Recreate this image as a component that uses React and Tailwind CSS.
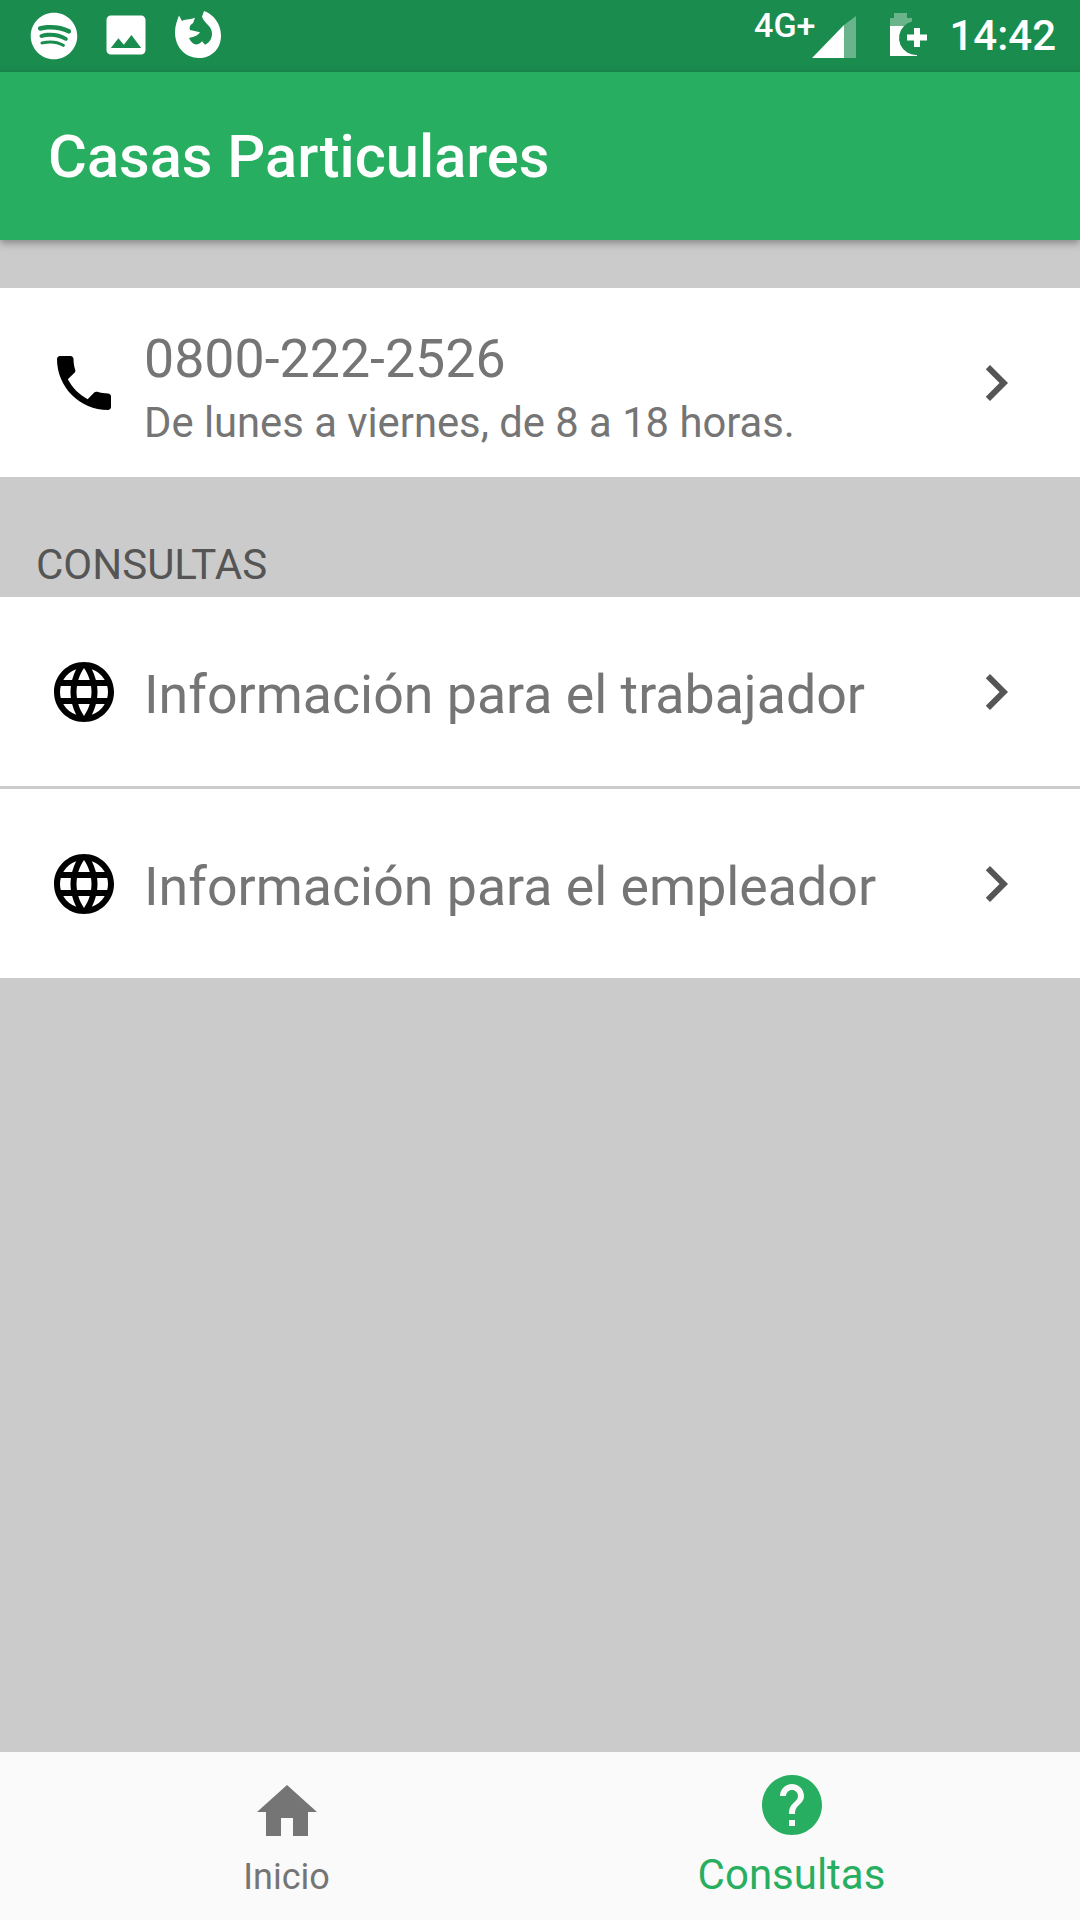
import { MdPhone, MdLanguage, MdChevronRight, MdHome, MdHelp, MdPhoto } from "react-icons/md";
import { FaSpotify } from "react-icons/fa";

function Firefox() {
  return (
    <svg width="60" height="60" viewBox="0 2.6 60 53.6" preserveAspectRatio="none" className="block">
      <path
        d="M35 8C45 11 52 20 52 30C52 42 42 50 30 50C16 50 6 40 6 27C6 21 8 17 10 12L13 17C15 15 20 16 26 14L24 19C21 20 20 23 21 25L31 27C28 31 24 31 20 32C23 38 28 40 33 35L36 38C41 36 43 32 43 28C43 21 35 19 33 13Z"
        fill="#fff"
      />
    </svg>
  );
}

function Signal() {
  return (
    <svg width="44" height="42" viewBox="0 0 44 42" className="block mt-[2px]">
      <path d="M44 0V42H32V9Z" fill="#fff" opacity="0.35" />
      <path d="M32 9V42H0Z" fill="#fff" />
    </svg>
  );
}

function Battery() {
  return (
    <svg width="38" height="44" viewBox="0 0 38 44" className="block -mt-[2px]">
      <path d="M5 0H18V5H23V8.5A17 17 0 0 0 15 13H1V5H5Z" fill="#fff" opacity="0.35" />
      <path d="M1 13H15A17 17 0 0 0 28 42V43H1Z" fill="#fff" />
      <path d="M25 15H31V21.5H38V27.5H31V34H25V27.5H18V21.5H25Z" fill="#fff" />
    </svg>
  );
}

function Row({ icon: Icon, children, className }) {
  return (
    <div className={`flex items-center bg-white ${className}`}>
      <div className="w-[144px] shrink-0 flex justify-center pl-[24px]">
        <Icon size={72} className="text-black" />
      </div>
      <div className="flex-1 text-[#757575]">{children}</div>
      <MdChevronRight size={72} className="text-[#555] mr-[48px]" />
    </div>
  );
}

export default function App() {
  return (
    <div className="w-[1080px] h-[1920px] flex flex-col bg-[#cbcbcb] overflow-hidden" style={{ fontFamily: "Roboto, sans-serif" }}>
      {/* status bar */}
      <div className="h-[72px] shrink-0 bg-[#1a8c4e] flex items-center text-white pl-[30px] pr-[24px]">
        <FaSpotify size={48} />
        <MdPhoto size={52} className="ml-[22px] -mt-[2px]" />
        <div className="ml-[17px] -mt-[2px]"><Firefox /></div>
        <div className="ml-auto flex items-center">
          <span className="text-[34px] font-medium relative -top-[11px] mr-[-3px]">4G+</span>
          <Signal />
          <div className="ml-[33px]"><Battery /></div>
          <span className="text-[42px] font-medium ml-[22px] leading-none">14:42</span>
        </div>
      </div>

      {/* app bar */}
      <div className="h-[168px] shrink-0 bg-[#27ae60] flex items-center pl-[48px] pt-[4px] shadow-[0_3px_8px_rgba(0,0,0,0.35)] relative">
        <span className="text-[59.6px] font-medium text-white">Casas Particulares</span>
      </div>

      <div className="h-[48px] shrink-0" />
      <Row icon={MdPhone} className="h-[189px]">
        <div className="pt-[12px] text-[53.7px] leading-[60px]">0800-222-2526</div>
        <div className="mt-[9px] text-[41.75px] leading-[50px]">De lunes a viernes, de 8 a 18 horas.</div>
      </Row>

      <div className="h-[120px] shrink-0 flex items-end pl-[36px] pb-[8px] text-[42px] text-[#555] leading-[48px]">CONSULTAS</div>

      <Row icon={MdLanguage} className="h-[192px] border-b-[3px] border-[#cbcbcb]">
        <div className="pt-[8px] text-[53.7px]">Información para el trabajador</div>
      </Row>
      <Row icon={MdLanguage} className="h-[189px]">
        <div className="pt-[8px] text-[53.7px]">Información para el empleador</div>
      </Row>

      <div className="flex-1" />

      {/* bottom nav */}
      <div className="h-[168px] shrink-0 bg-[#fafafa] flex">
        <div className="w-1/2 flex flex-col items-center pt-[24px] pl-[33px] text-[#757575]">
          <MdHome size={72} />
          <span className="text-[36px] leading-[44px] mt-[7px]">Inicio</span>
        </div>
        <div className="w-1/2 flex flex-col items-center pt-[17px] pr-[37px] text-[#27ae60]">
          <MdHelp size={72} />
          <span className="text-[42px] leading-[50px] mt-[9px]">Consultas</span>
        </div>
      </div>
    </div>
  );
}
